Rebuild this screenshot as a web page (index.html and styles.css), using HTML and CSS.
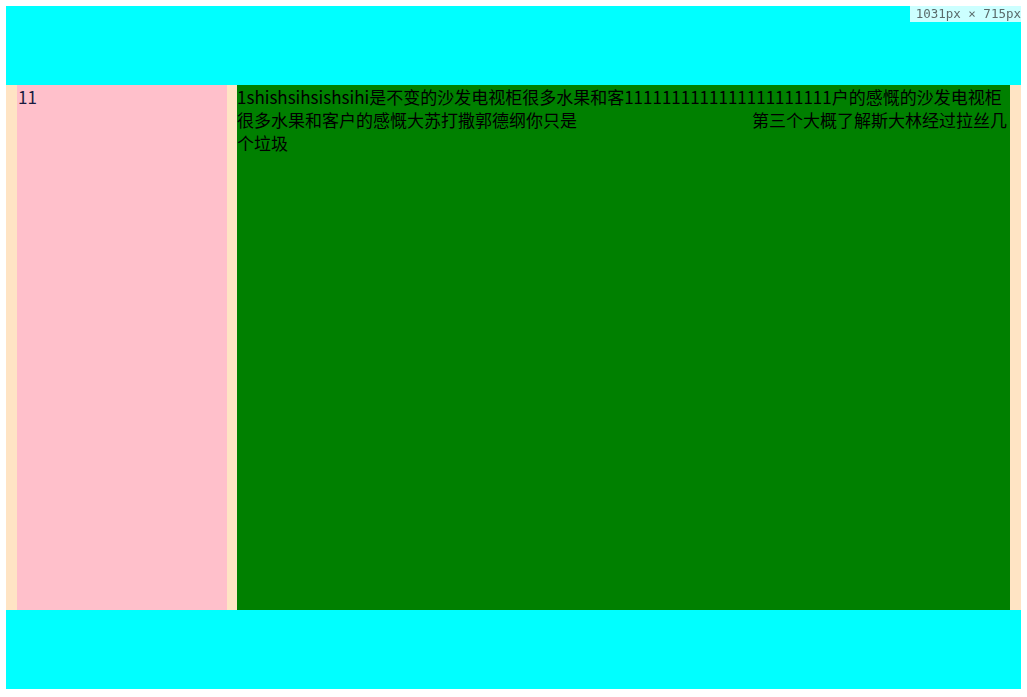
FILE: index.html
```html
<!DOCTYPE html>
<html lang="zh">
<head>
<meta charset="utf-8">
<title>layout</title>
<link rel="stylesheet" href="styles.css">
</head>
<body>
<div class="size-label">1031px × 715px</div>
<header class="top"></header>
<main class="middle">
  <aside class="side">11</aside>
  <section class="content">
    <div class="line">1shishsihsishsihi是不变的沙发电视柜很多水果和客1111111111111111111111户的感慨的沙发电视柜</div>
    <div class="line split"><span>很多水果和客户的感慨大苏打撒郭德纲你只是</span><span>第三个大概了解斯大林经过拉丝几</span></div>
    <div class="line">个垃圾</div>
  </section>
</main>
<footer class="bottom"></footer>
</body>
</html>
```

FILE: styles.css
```css
html, body {
  background: #ffffff;
}
body {
  margin: 6px;
  font-family: "Noto Sans CJK SC", "Noto Sans", sans-serif;
  font-size: 17px;
  line-height: 23px;
  color: #000;
}
.top, .bottom {
  height: 79px;
  background: #00ffff;
}
.middle {
  height: 525px;
  background: #ffe4c4;
  display: flex;
  gap: 10px;
  padding: 0 11px;
}
.side {
  width: 210px;
  flex: none;
  box-sizing: border-box;
  background: #ffc0cb;
  color: #1a1a40;
  padding-left: 1px;
}
.content {
  flex: 1;
  background: #008000;
  padding-right: 3px;
}
.line {
  white-space: nowrap;
}
.split {
  display: flex;
  justify-content: space-between;
}
.size-label {
  position: fixed;
  top: 6px;
  right: 6px;
  width: 111px;
  height: 16px;
  box-sizing: border-box;
  background: #ccffff;
  color: #5a6a6a;
  font-family: "DejaVu Sans Mono", "Liberation Mono", monospace;
  font-size: 12.5px;
  line-height: 16px;
  text-align: right;
  padding-right: 0;
  white-space: nowrap;
}
```
